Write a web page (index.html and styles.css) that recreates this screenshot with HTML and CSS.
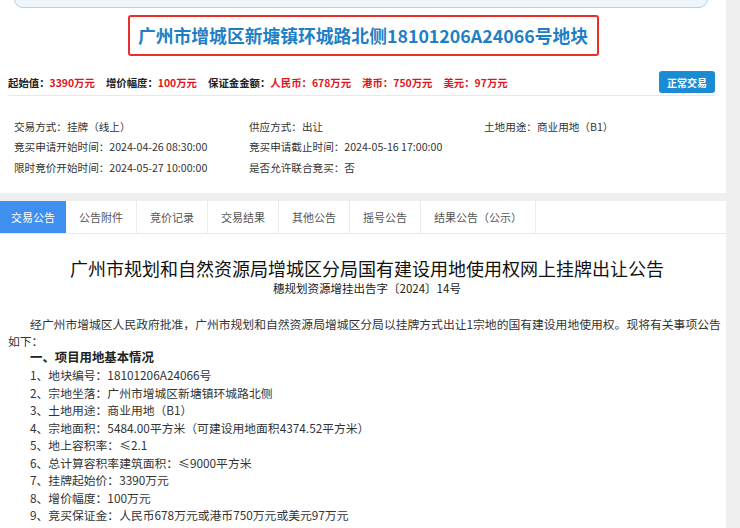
FILE: index.html
```html
<!DOCTYPE html>
<html lang="zh-CN">
<head>
    <meta charset="UTF-8">
    <meta name="viewport" content="width=device-width, initial-scale=1.0">
    <title>地块详情</title>
    <link rel="stylesheet" href="styles.css">
</head>
<body>
    <div class="page">
        <!-- Plot summary -->
        <div class="card summary">
            <div class="notice-bar"></div>
            <div class="plot-title">
                <h1>广州市增城区新塘镇环城路北侧18101206A24066号地块</h1>
            </div>
            <div class="price-row">
                <div class="prices">
                    <span class="price">起始值：<em>3390万元</em></span>
                    <span class="price">增价幅度：<em>100万元</em></span>
                    <span class="price">保证金金额：<em>人民币：678万元</em></span>
                    <span class="price"><em>港币：750万元</em></span>
                    <span class="price"><em>美元：97万元</em></span>
                </div>
                <button class="status-btn">正常交易</button>
            </div>
            <div class="info-grid">
                <div>交易方式：挂牌（线上）</div>
                <div>供应方式：出让</div>
                <div>土地用途：商业用地（B1）</div>
                <div>竞买申请开始时间：2024-04-26 08:30:00</div>
                <div>竞买申请截止时间：2024-05-16 17:00:00</div>
                <div></div>
                <div>限时竞价开始时间：2024-05-27 10:00:00</div>
                <div>是否允许联合竞买：否</div>
                <div></div>
            </div>
        </div>

        <!-- Tabs + announcement -->
        <div class="card detail">
            <ul class="tabs">
                <li class="tab active">交易公告</li>
                <li class="tab">公告附件</li>
                <li class="tab">竞价记录</li>
                <li class="tab">交易结果</li>
                <li class="tab">其他公告</li>
                <li class="tab">摇号公告</li>
                <li class="tab">结果公告（公示）</li>
            </ul>
            <div class="article">
                <h2>广州市规划和自然资源局增城区分局国有建设用地使用权网上挂牌出让公告</h2>
                <p class="doc-no">穗规划资源增挂出告字〔2024〕14号</p>
                <p class="lead">经广州市增城区人民政府批准，广州市规划和自然资源局增城区分局以挂牌方式出让1宗地的国有建设用地使用权。现将有关事项公告如下：</p>
                <h3>一、项目用地基本情况</h3>
                <ol class="facts">
                    <li>1、地块编号：18101206A24066号</li>
                    <li>2、宗地坐落：广州市增城区新塘镇环城路北侧</li>
                    <li>3、土地用途：商业用地（B1）</li>
                    <li>4、宗地面积：5484.00平方米（可建设用地面积4374.52平方米）</li>
                    <li>5、地上容积率：≤2.1</li>
                    <li>6、总计算容积率建筑面积：≤9000平方米</li>
                    <li>7、挂牌起始价：3390万元</li>
                    <li>8、增价幅度：100万元</li>
                    <li>9、竞买保证金：人民币678万元或港币750万元或美元97万元</li>
                </ol>
            </div>
        </div>
    </div>
</body>
</html>
```

FILE: styles.css
```css
body {
    margin: 0;
    padding: 0;
    background-color: #efefef;
    font-family: "Noto Sans CJK SC", "Noto Sans", sans-serif;
    color: #333;
    overflow: hidden;
}
.page {
    width: 726px;
}
.card {
    background-color: #fff;
}
.summary {
    padding-bottom: 15px;
}
.notice-bar {
    height: 20px;
    margin: -14px 18px 0 14px;
    border: 1px solid #a9d3f2;
    border-radius: 9px;
    background-color: #eef6fc;
}
.plot-title {
    width: 467px;
    height: 37px;
    margin: 7px auto 0;
    border: 2px solid #e8302b;
    border-radius: 3px;
    display: flex;
    align-items: center;
    justify-content: center;
}
.plot-title h1 {
    margin: 0;
    font-size: 17.8px;
    font-weight: bold;
    color: #1f7fc6;
    line-height: 1;
}
.price-row {
    display: flex;
    align-items: center;
    justify-content: space-between;
    margin: 15px 11px 0 8px;
    padding-bottom: 2px;
    border-bottom: 1px solid #e8e8e8;
}
.prices {
    display: flex;
    gap: 11px;
    font-size: 10.4px;
    font-weight: bold;
    color: #222;
}
.price em {
    font-style: normal;
    color: #e0161c;
}
.status-btn {
    width: 56px;
    height: 22px;
    padding: 0;
    border: none;
    border-radius: 3px;
    background-color: #1b8bd3;
    color: #fff;
    font-family: inherit;
    font-size: 10px;
    font-weight: bold;
}
.info-grid {
    display: grid;
    grid-template-columns: 235px 235px 1fr;
    grid-auto-rows: 20.5px;
    align-items: center;
    margin-top: 20px;
    padding-left: 14px;
    font-size: 10.6px;
    color: #333;
}
.detail {
    margin-top: 8px;
}
.tabs {
    display: flex;
    margin: 0;
    padding: 0;
    list-style: none;
    height: 32px;
    border-bottom: 1px solid #e8e8e8;
}
.tab {
    padding: 0 13px;
    line-height: 32px;
    font-size: 11px;
    color: #555;
    border-right: 1px solid #ececec;
}
.tab.active {
    padding: 0 11px;
    background-color: #3f8ff0;
    color: #fff;
    border-right: none;
}
.article {
    padding: 22px 0 20px 8px;
}
.article h2 {
    margin: 0;
    font-size: 18px;
    font-weight: normal;
    line-height: 24px;
    text-align: center;
    color: #111;
}
.doc-no {
    margin: 0;
    font-size: 11.5px;
    line-height: 16px;
    text-align: center;
    color: #222;
}
.lead {
    margin: 19px 0 0;
    text-indent: 22px;
    font-size: 11.8px;
    line-height: 17px;
    color: #333;
}
.article h3 {
    margin: 0;
    padding-left: 22px;
    font-size: 12.4px;
    line-height: 17.5px;
    font-weight: bold;
    color: #222;
}
.facts {
    margin: 0;
    padding-left: 22px;
    list-style: none;
    font-size: 11.8px;
    line-height: 17.5px;
    color: #333;
}
```
